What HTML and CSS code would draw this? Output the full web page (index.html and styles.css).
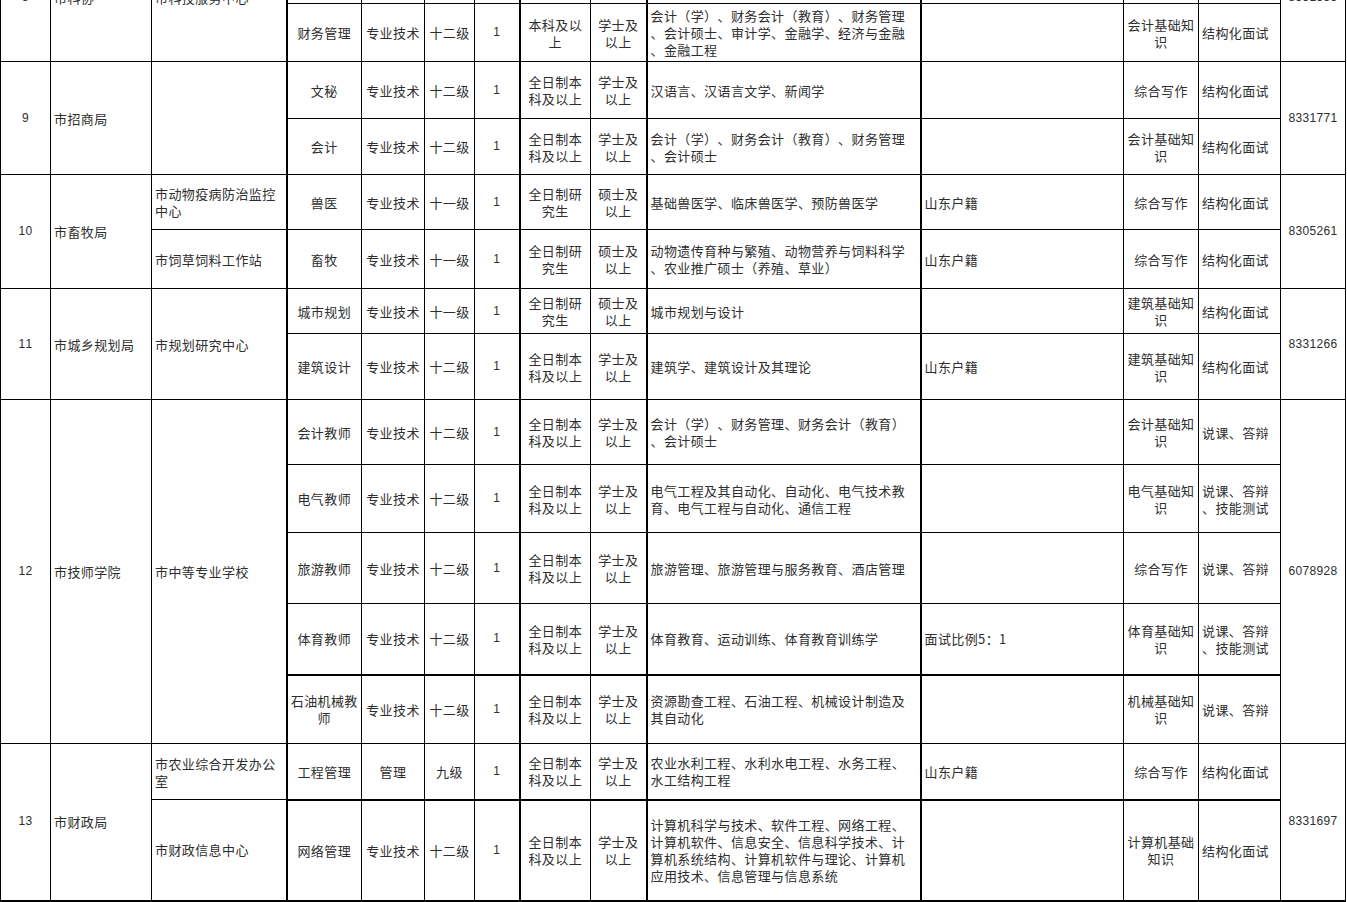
FILE: index.html
```html
<!DOCTYPE html>
<html lang="zh-CN">
<head>
<meta charset="utf-8">
<title>职位表</title>
<link rel="stylesheet" href="styles.css">
</head>
<body>
<div class="page">
<table class="grid">
<colgroup>
<col class="c1"><col class="c2"><col class="c3"><col class="c4"><col class="c5"><col class="c6"><col class="c7"><col class="c8"><col class="c9"><col class="c10"><col class="c11"><col class="c12"><col class="c13"><col class="c14">
</colgroup>
<tbody>
<tr class="h70">
<td rowspan="2" class="n">8</td>
<td rowspan="2" class="l">市科协</td>
<td rowspan="2" class="l">市科技服务中心</td>
<td></td><td></td><td></td><td></td><td></td><td></td><td></td><td></td><td></td><td></td>
<td rowspan="2" class="n">8331555</td>
</tr>
<tr class="h58">
<td>财务管理</td><td>专业技术</td><td>十二级</td><td class="n">1</td>
<td>本科及以<br>上</td><td>学士及<br>以上</td>
<td class="l">会计（学）、财务会计（教育）、财务管理<br>、会计硕士、审计学、金融学、经济与金融<br>、金融工程</td>
<td class="l"></td>
<td>会计基础知<br>识</td>
<td class="l">结构化面试</td>
</tr>

<tr class="h57">
<td rowspan="2" class="n">9</td>
<td rowspan="2" class="l">市招商局</td>
<td rowspan="2" class="l"></td>
<td>文秘</td><td>专业技术</td><td>十二级</td><td class="n">1</td>
<td>全日制本<br>科及以上</td><td>学士及<br>以上</td>
<td class="l">汉语言、汉语言文学、新闻学</td>
<td class="l"></td>
<td>综合写作</td>
<td class="l">结构化面试</td>
<td rowspan="2" class="n">8331771</td>
</tr>
<tr class="h56">
<td>会计</td><td>专业技术</td><td>十二级</td><td class="n">1</td>
<td>全日制本<br>科及以上</td><td>学士及<br>以上</td>
<td class="l">会计（学）、财务会计（教育）、财务管理<br>、会计硕士</td>
<td class="l"></td>
<td>会计基础知<br>识</td>
<td class="l">结构化面试</td>
</tr>

<tr class="h55">
<td rowspan="2" class="n">10</td>
<td rowspan="2" class="l">市畜牧局</td>
<td class="l">市动物疫病防治监控<br>中心</td>
<td>兽医</td><td>专业技术</td><td>十一级</td><td class="n">1</td>
<td>全日制研<br>究生</td><td>硕士及<br>以上</td>
<td class="l">基础兽医学、临床兽医学、预防兽医学</td>
<td class="l">山东户籍</td>
<td>综合写作</td>
<td class="l">结构化面试</td>
<td rowspan="2" class="n">8305261</td>
</tr>
<tr class="h59">
<td class="l">市饲草饲料工作站</td>
<td>畜牧</td><td>专业技术</td><td>十一级</td><td class="n">1</td>
<td>全日制研<br>究生</td><td>硕士及<br>以上</td>
<td class="l">动物遗传育种与繁殖、动物营养与饲料科学<br>、农业推广硕士（养殖、草业）</td>
<td class="l">山东户籍</td>
<td>综合写作</td>
<td class="l">结构化面试</td>
</tr>

<tr class="h45">
<td rowspan="2" class="n">11</td>
<td rowspan="2" class="l">市城乡规划局</td>
<td rowspan="2" class="l">市规划研究中心</td>
<td>城市规划</td><td>专业技术</td><td>十一级</td><td class="n">1</td>
<td>全日制研<br>究生</td><td>硕士及<br>以上</td>
<td class="l">城市规划与设计</td>
<td class="l"></td>
<td>建筑基础知<br>识</td>
<td class="l">结构化面试</td>
<td rowspan="2" class="n">8331266</td>
</tr>
<tr class="h66">
<td>建筑设计</td><td>专业技术</td><td>十二级</td><td class="n">1</td>
<td>全日制本<br>科及以上</td><td>学士及<br>以上</td>
<td class="l">建筑学、建筑设计及其理论</td>
<td class="l">山东户籍</td>
<td>建筑基础知<br>识</td>
<td class="l">结构化面试</td>
</tr>

<tr class="h65">
<td rowspan="5" class="n">12</td>
<td rowspan="5" class="l">市技师学院</td>
<td rowspan="5" class="l">市中等专业学校</td>
<td>会计教师</td><td>专业技术</td><td>十二级</td><td class="n">1</td>
<td>全日制本<br>科及以上</td><td>学士及<br>以上</td>
<td class="l">会计（学）、财务管理、财务会计（教育）<br>、会计硕士</td>
<td class="l"></td>
<td>会计基础知<br>识</td>
<td class="l">说课、答辩</td>
<td rowspan="5" class="n">6078928</td>
</tr>
<tr class="h68">
<td>电气教师</td><td>专业技术</td><td>十二级</td><td class="n">1</td>
<td>全日制本<br>科及以上</td><td>学士及<br>以上</td>
<td class="l">电气工程及其自动化、自动化、电气技术教<br>育、电气工程与自动化、通信工程</td>
<td class="l"></td>
<td>电气基础知<br>识</td>
<td class="l">说课、答辩<br>、技能测试</td>
</tr>
<tr class="h71">
<td>旅游教师</td><td>专业技术</td><td>十二级</td><td class="n">1</td>
<td>全日制本<br>科及以上</td><td>学士及<br>以上</td>
<td class="l">旅游管理、旅游管理与服务教育、酒店管理</td>
<td class="l"></td>
<td>综合写作</td>
<td class="l">说课、答辩</td>
</tr>
<tr class="h71">
<td>体育教师</td><td>专业技术</td><td>十二级</td><td class="n">1</td>
<td>全日制本<br>科及以上</td><td>学士及<br>以上</td>
<td class="l">体育教育、运动训练、体育教育训练学</td>
<td class="l">面试比例5：1</td>
<td>体育基础知<br>识</td>
<td class="l">说课、答辩<br>、技能测试</td>
</tr>
<tr class="h69">
<td class="tt">石油机械教<br>师</td><td class="tt">专业技术</td><td class="tt">十二级</td><td class="tt n">1</td>
<td class="tt">全日制本<br>科及以上</td><td class="tt">学士及<br>以上</td>
<td class="tt l">资源勘查工程、石油工程、机械设计制造及<br>其自动化</td>
<td class="tt l"></td>
<td class="tt">机械基础知<br>识</td>
<td class="tt l">说课、答辩</td>
</tr>

<tr class="h56">
<td rowspan="2" class="n">13</td>
<td rowspan="2" class="l">市财政局</td>
<td class="l">市农业综合开发办公<br>室</td>
<td>工程管理</td><td>管理</td><td>九级</td><td class="n">1</td>
<td>全日制本<br>科及以上</td><td>学士及<br>以上</td>
<td class="l">农业水利工程、水利水电工程、水务工程、<br>水工结构工程</td>
<td class="l">山东户籍</td>
<td>综合写作</td>
<td class="l">结构化面试</td>
<td rowspan="2" class="n">8331697</td>
</tr>
<tr class="h101">
<td class="l">市财政信息中心</td>
<td class="tt">网络管理</td><td class="tt">专业技术</td><td class="tt">十二级</td><td class="tt n">1</td>
<td class="tt">全日制本<br>科及以上</td><td class="tt">学士及<br>以上</td>
<td class="tt l">计算机科学与技术、软件工程、网络工程、<br>计算机软件、信息安全、信息科学技术、计<br>算机系统结构、计算机软件与理论、计算机<br>应用技术、信息管理与信息系统</td>
<td class="tt l"></td>
<td class="tt">计算机基础<br>知识</td>
<td class="tt l">结构化面试</td>
</tr>
</tbody>
</table>
</div>
</body>
</html>
```
FILE: styles.css
```css
html, body {
  margin: 0;
  padding: 0;
  background: #ffffff;
}

body {
  font-family: "Noto Sans CJK SC", "Liberation Sans", sans-serif;
  font-size: 13px;
  color: #2e2e2e;
  text-spacing-trim: space-all;
  font-kerning: none;
}

.page {
  height: 902px;
  overflow: hidden;
}

.grid {
  border-collapse: collapse;
  table-layout: fixed;
  width: 1346px;
  margin-top: -67px;
  border-bottom: 2px solid #000;
}

.c1 { width: 50px; }
.c2 { width: 101px; }
.c3 { width: 135px; }
.c4 { width: 75px; border-left: 2px solid #000; }
.c5 { width: 63px; }
.c6 { width: 50px; }
.c7 { width: 45px; }
.c8 { width: 71px; border-left: 2px solid #000; }
.c9 { width: 56px; }
.c10 { width: 274px; border-left: 2px solid #000; }
.c11 { width: 203px; border-left: 2px solid #000; }
.c12 { width: 75px; }
.c13 { width: 82px; }
.c14 { width: 65px; }

.grid td {
  border: 1px solid #000;
  padding: 0 2px;
  vertical-align: middle;
  text-align: center;
  line-height: 17px;
  letter-spacing: 0.4px;
  white-space: nowrap;
  overflow: hidden;
  text-spacing-trim: space-all;
}

.grid td.l {
  text-align: left;
  padding-left: 3px;
}

.grid td.n {
  font-family: "Liberation Sans", sans-serif;
  font-size: 12px;
  letter-spacing: 0.3px;
}

.grid td.tt {
  border-top: 2px solid #000;
}

.h45 { height: 45px; }
.h55 { height: 55px; }
.h56 { height: 56px; }
.h57 { height: 57px; }
.h58 { height: 58px; }
.h59 { height: 59px; }
.h65 { height: 65px; }
.h66 { height: 66px; }
.h68 { height: 68px; }
.h69 { height: 69px; }
.h70 { height: 70px; }
.h71 { height: 71px; }
.h101 { height: 101px; }
```
